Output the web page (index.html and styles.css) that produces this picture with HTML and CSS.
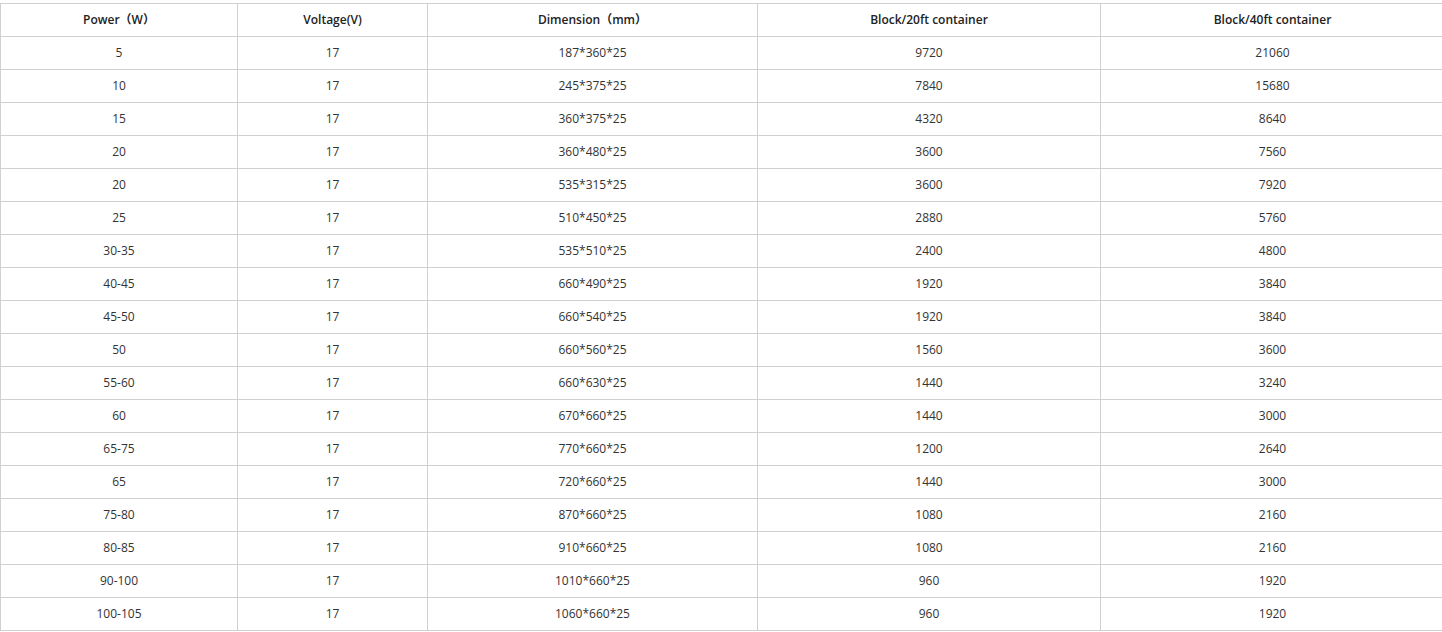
FILE: index.html
```html
<!DOCTYPE html>
<html>
<head>
<meta charset="utf-8">
<link rel="stylesheet" href="styles.css">
</head>
<body>
<table class="spec">
<colgroup>
<col class="c1"><col class="c2"><col class="c3"><col class="c4"><col class="c5">
</colgroup>
<thead>
<tr><th>Power（W）</th><th>Voltage(V)</th><th>Dimension（mm）</th><th>Block/20ft container</th><th>Block/40ft container</th></tr>
</thead>
<tbody>
<tr><td>5</td><td>17</td><td>187*360*25</td><td>9720</td><td>21060</td></tr>
<tr><td>10</td><td>17</td><td>245*375*25</td><td>7840</td><td>15680</td></tr>
<tr><td>15</td><td>17</td><td>360*375*25</td><td>4320</td><td>8640</td></tr>
<tr><td>20</td><td>17</td><td>360*480*25</td><td>3600</td><td>7560</td></tr>
<tr><td>20</td><td>17</td><td>535*315*25</td><td>3600</td><td>7920</td></tr>
<tr><td>25</td><td>17</td><td>510*450*25</td><td>2880</td><td>5760</td></tr>
<tr><td>30-35</td><td>17</td><td>535*510*25</td><td>2400</td><td>4800</td></tr>
<tr><td>40-45</td><td>17</td><td>660*490*25</td><td>1920</td><td>3840</td></tr>
<tr><td>45-50</td><td>17</td><td>660*540*25</td><td>1920</td><td>3840</td></tr>
<tr><td>50</td><td>17</td><td>660*560*25</td><td>1560</td><td>3600</td></tr>
<tr><td>55-60</td><td>17</td><td>660*630*25</td><td>1440</td><td>3240</td></tr>
<tr><td>60</td><td>17</td><td>670*660*25</td><td>1440</td><td>3000</td></tr>
<tr><td>65-75</td><td>17</td><td>770*660*25</td><td>1200</td><td>2640</td></tr>
<tr><td>65</td><td>17</td><td>720*660*25</td><td>1440</td><td>3000</td></tr>
<tr><td>75-80</td><td>17</td><td>870*660*25</td><td>1080</td><td>2160</td></tr>
<tr><td>80-85</td><td>17</td><td>910*660*25</td><td>1080</td><td>2160</td></tr>
<tr><td>90-100</td><td>17</td><td>1010*660*25</td><td>960</td><td>1920</td></tr>
<tr><td>100-105</td><td>17</td><td>1060*660*25</td><td>960</td><td>1920</td></tr>
</tbody>
</table>
</body>
</html>
```
FILE: styles.css
```css
html, body {
  margin: 0;
  padding: 0;
  overflow: hidden;
  background: #fff;
}
body {
  padding-top: 3px;
  font-family: "Open Sans", "Noto Sans CJK SC", sans-serif;
  font-size: 12px;
  color: #333;
}
.spec {
  border-collapse: collapse;
  table-layout: fixed;
  width: 1444px;
}
.c1 { width: 237px; }
.c2 { width: 190px; }
.c3 { width: 330px; }
.c4 { width: 343px; }
.c5 { width: 344px; }
.spec th, .spec td {
  border: 1px solid #d0d0d0;
  height: 32px;
  padding: 0 0 2px 0;
  text-align: center;
  vertical-align: middle;
  box-sizing: border-box;
}
.spec tr { height: 33px; }
.spec th {
  font-weight: 600;
  color: #222;
}
```
